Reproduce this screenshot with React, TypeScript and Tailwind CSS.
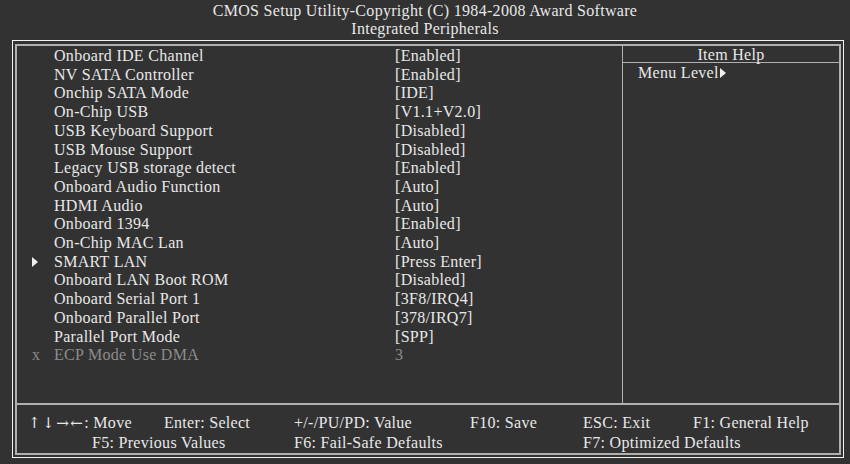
import React from 'react';

const rows = [
  { label: 'Onboard IDE Channel', value: '[Enabled]' },
  { label: 'NV SATA Controller', value: '[Enabled]' },
  { label: 'Onchip SATA Mode', value: '[IDE]' },
  { label: 'On-Chip USB', value: '[V1.1+V2.0]' },
  { label: 'USB Keyboard Support', value: '[Disabled]' },
  { label: 'USB Mouse Support', value: '[Disabled]' },
  { label: 'Legacy USB storage detect', value: '[Enabled]' },
  { label: 'Onboard Audio Function', value: '[Auto]' },
  { label: 'HDMI Audio', value: '[Auto]' },
  { label: 'Onboard 1394', value: '[Enabled]' },
  { label: 'On-Chip MAC Lan', value: '[Auto]' },
  { label: 'SMART LAN', value: '[Press Enter]', mark: 'arrow' },
  { label: 'Onboard LAN Boot ROM', value: '[Disabled]' },
  { label: 'Onboard Serial Port 1', value: '[3F8/IRQ4]' },
  { label: 'Onboard Parallel Port', value: '[378/IRQ7]' },
  { label: 'Parallel Port Mode', value: '[SPP]' },
  { label: 'ECP Mode Use DMA', value: '3', mark: 'x' },
];

const Tri = ({ className }: { className?: string }) => (
  <svg width="6" height="10" viewBox="0 0 6 10" className={className}>
    <polygon points="0,0 6,5 0,10" fill="#f0f0f0" />
  </svg>
);

const App = () => {
  return (
    <div
      className="w-[850px] h-[464px] bg-[#323232] text-[#e8e8e8] text-[16px] tracking-[0.3px] overflow-hidden"
      style={{ fontFamily: '"Liberation Serif", "Times New Roman", serif' }}
    >
      {/* Title */}
      <div className="pt-[2px] text-center leading-[18px]">
        <div>CMOS Setup Utility-Copyright (C) 1984-2008 Award Software</div>
        <div>Integrated Peripherals</div>
      </div>

      {/* Frame */}
      <div className="mt-[2px] ml-[12px] w-[832px] h-[418px] border border-[#f2f2f2] pt-[3px] px-[2px] pb-[2px]">
        <div className="h-full border-2 border-[#b0b0b0] flex flex-col">
          <div className="h-[357px] flex">
            {/* Settings list */}
            <div className="w-[605px] pt-[1px]">
              {rows.map((r, i) => (
                <div
                  key={i}
                  className={`flex leading-[18.7px] ${r.mark === 'x' ? 'text-[#8c8c8c]' : ''}`}
                >
                  <div className="w-[37px] pl-[15px] flex items-center">
                    {r.mark === 'arrow' && <Tri />}
                    {r.mark === 'x' && <span>x</span>}
                  </div>
                  <div className="w-[341px]">{r.label}</div>
                  <div>{r.value}</div>
                </div>
              ))}
            </div>

            {/* Item help */}
            <div className="flex-1 border-l border-[#b0b0b0]">
              <div className="h-[17px] leading-[17px] text-center border-b border-[#b0b0b0]">
                Item Help
              </div>
              <div className="pl-[15px] pt-[1px] leading-[18.7px] flex items-center">
                Menu Level
                <Tri className="ml-[1px]" />
              </div>
            </div>
          </div>

          {/* Footer */}
          <div className="flex-1 border-t-2 border-[#b0b0b0] pt-[8px] leading-[19px]">
            <div className="flex pl-[11px]">
              <div className="w-[136px]">
                <span
                  className="text-[15px] tracking-[1.5px]"
                  style={{ fontFamily: '"DejaVu Serif", "DejaVu Sans", serif' }}
                >
                  ↑↓→←
                </span>
                : Move
              </div>
              <div className="w-[130px]">Enter: Select</div>
              <div className="w-[176px]">+/-/PU/PD: Value</div>
              <div className="w-[113px]">F10: Save</div>
              <div className="w-[110px]">ESC: Exit</div>
              <div>F1: General Help</div>
            </div>
            <div className="flex pl-[75px]">
              <div className="w-[202px]">F5: Previous Values</div>
              <div className="w-[289px]">F6: Fail-Safe Defaults</div>
              <div>F7: Optimized Defaults</div>
            </div>
          </div>
        </div>
      </div>
    </div>
  );
};

export default App;
